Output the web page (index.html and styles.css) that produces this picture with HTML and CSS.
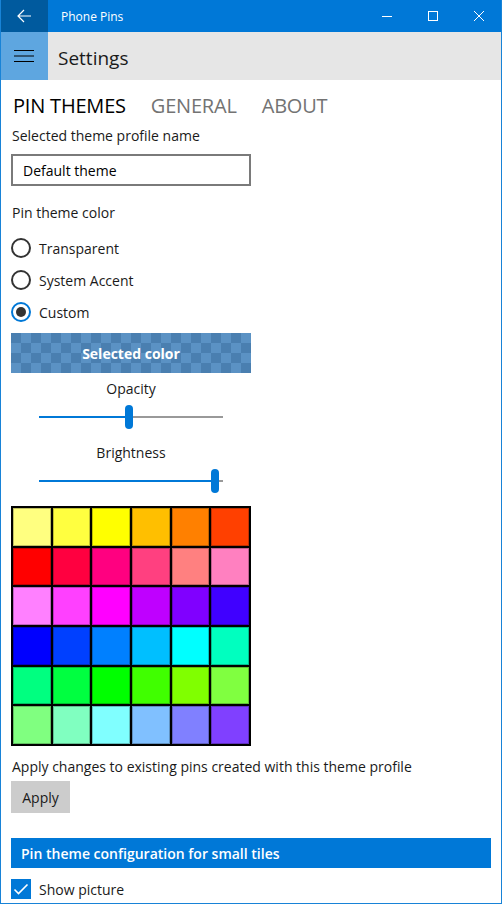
FILE: index.html
```html
<!DOCTYPE html>
<html lang="en">
<head>
    <meta charset="UTF-8">
    <title>Phone Pins</title>
    <link rel="stylesheet" href="styles.css">
</head>
<body>

    <div class="window">
        <div class="titlebar">
            <div class="back-btn">
                <svg width="16" height="16" viewBox="0 0 16 16"><path d="M15 8H2M8 2L2 8l6 6" fill="none" stroke="#fff" stroke-width="1.2"/></svg>
            </div>
            <div class="app-title">Phone Pins</div>
            <div class="caption-btns">
                <div class="caption-btn"><svg width="10" height="10" viewBox="0 0 10 10"><path d="M0 5.5h10" stroke="#fff" stroke-width="1"/></svg></div>
                <div class="caption-btn"><svg width="10" height="10" viewBox="0 0 10 10"><rect x="0.5" y="0.5" width="9" height="9" fill="none" stroke="#fff" stroke-width="1"/></svg></div>
                <div class="caption-btn"><svg width="10" height="10" viewBox="0 0 10 10"><path d="M0 0L10 10M10 0L0 10" stroke="#fff" stroke-width="1"/></svg></div>
            </div>
        </div>

        <div class="header">
            <div class="menu-btn">
                <svg width="20" height="14" viewBox="0 0 20 14"><path d="M0 1.5h20M0 7h20M0 12.5h20" stroke="#000" stroke-width="1.2"/></svg>
            </div>
            <div class="page-title">Settings</div>
        </div>

        <div class="content">
            <div class="tabs">
                <span class="tab active">PIN THEMES</span>
                <span class="tab">GENERAL</span>
                <span class="tab">ABOUT</span>
            </div>

            <div class="label first-label">Selected theme profile name</div>
            <div class="textbox">Default theme</div>

            <div class="label color-label">Pin theme color</div>
            <div class="radios">
                <div class="radio-row"><span class="radio"></span>Transparent</div>
                <div class="radio-row"><span class="radio"></span>System Accent</div>
                <div class="radio-row"><span class="radio checked"></span>Custom</div>
            </div>

            <div class="selected-color">Selected color</div>

            <div class="slider-block">
                <div class="slider-label">Opacity</div>
                <div class="slider">
                    <div class="track-fill" style="width: 86px"></div>
                    <div class="thumb"></div>
                    <div class="track-rest"></div>
                </div>
            </div>
            <div class="slider-block">
                <div class="slider-label">Brightness</div>
                <div class="slider">
                    <div class="track-fill" style="width: 172px"></div>
                    <div class="thumb"></div>
                    <div class="track-rest"></div>
                </div>
            </div>

            <div class="palette" id="palette"></div>

            <div class="label apply-label">Apply changes to existing pins created with this theme profile</div>
            <div class="apply-btn">Apply</div>

            <div class="section-bar">Pin theme configuration for small tiles</div>
            <div class="check-row">
                <span class="checkbox">
                    <svg width="20" height="20" viewBox="0 0 20 20"><path d="M3.5 10.5l4 4 9-9" fill="none" stroke="#fff" stroke-width="1.6"/></svg>
                </span>
                Show picture
            </div>
        </div>
    </div>

    <script>
        const colors = [
            "#ffff80", "#ffff40", "#ffff00", "#ffbf00", "#ff8000", "#ff4000",
            "#ff0000", "#ff0040", "#ff0080", "#ff4080", "#ff8080", "#ff80c0",
            "#ff80ff", "#ff40ff", "#ff00ff", "#bf00ff", "#8000ff", "#4000ff",
            "#0000ff", "#0040ff", "#0080ff", "#00bfff", "#00ffff", "#00ffbf",
            "#00ff80", "#00ff40", "#00ff00", "#40ff00", "#80ff00", "#80ff40",
            "#80ff80", "#80ffc0", "#80ffff", "#80c0ff", "#8080ff", "#8040ff"
        ];

        const palette = document.getElementById("palette");
        colors.forEach(color => {
            const cell = document.createElement("div");
            cell.className = "swatch";
            cell.style.background = color;
            palette.appendChild(cell);
        });
    </script>

</body>
</html>
```

FILE: styles.css
```css
body {
    margin: 0;
    font-family: "Open Sans", "Noto Sans", sans-serif;
    color: #000;
    background: #fff;
}

.window {
    width: 502px;
    height: 904px;
    box-sizing: border-box;
    border: 1px solid #1883d7;
    border-top: none;
    overflow: hidden;
}

.titlebar {
    display: flex;
    align-items: center;
    height: 32px;
    margin: 0 -1px;
    background: #0078d7;
    color: #fff;
}

.back-btn {
    width: 48px;
    height: 32px;
    display: flex;
    align-items: center;
    justify-content: center;
    background: #005a9e;
}

.app-title {
    flex: 1;
    padding-left: 13px;
    font-size: 12px;
}

.caption-btns {
    display: flex;
}

.caption-btn {
    width: 46px;
    height: 32px;
    display: flex;
    align-items: center;
    justify-content: center;
}

.header {
    display: flex;
    align-items: center;
    height: 48px;
    margin-left: -1px;
    background: #e6e6e6;
}

.menu-btn {
    width: 48px;
    height: 48px;
    display: flex;
    align-items: center;
    justify-content: center;
    background: #5ea6e0;
}

.page-title {
    padding: 3px 0 0 10px;
    font-size: 19px;
    color: #1a1a1a;
}

.content {
    padding: 10px 10px 0 10px;
}

.tabs {
    display: flex;
    gap: 25px;
    padding-left: 2px;
    height: 30px;
    align-items: center;
}

.tab {
    font-size: 20px;
    color: #737373;
    letter-spacing: -0.2px;
}

.tab.active {
    color: #000;
}

.label {
    font-size: 14px;
    padding-left: 1px;
    margin-top: 4px;
    height: 20px;
    color: #1a1a1a;
}

.first-label {
    margin-top: 6px;
}

.textbox {
    width: 240px;
    height: 32px;
    box-sizing: border-box;
    margin-top: 8px;
    border: 2px solid #7a7a7a;
    padding: 5px 0 0 10px;
    font-size: 14px;
}

.color-label {
    margin-top: 17px;
}

.radios {
    margin-top: 9px;
}

.radio-row {
    display: flex;
    align-items: center;
    height: 32px;
    font-size: 14px;
    color: #1a1a1a;
}

.radio {
    width: 20px;
    height: 20px;
    box-sizing: border-box;
    border: 2px solid #333;
    border-radius: 50%;
    margin-right: 8px;
    position: relative;
}

.radio.checked {
    border-color: #0078d7;
}

.radio.checked::after {
    content: "";
    position: absolute;
    left: 3px;
    top: 3px;
    width: 10px;
    height: 10px;
    border-radius: 50%;
    background: #333;
}

.selected-color {
    width: 240px;
    height: 40px;
    margin-top: 5px;
    display: flex;
    align-items: center;
    justify-content: center;
    color: #fff;
    font-weight: 700;
    font-size: 14px;
    background-image: conic-gradient(#5b92c4 25%, #4a7fb0 0 50%, #5b92c4 0 75%, #4a7fb0 0);
    background-size: 20px 20px;
}

.slider-block {
    width: 240px;
    padding: 6px 0 4px 0;
}

.slider-label {
    text-align: center;
    font-size: 14px;
    height: 20px;
    color: #1a1a1a;
}

.slider {
    display: flex;
    align-items: center;
    margin: 2px 28px 0 28px;
    height: 32px;
}

.track-fill {
    height: 2px;
    background: #0078d7;
}

.track-rest {
    flex: 1;
    height: 2px;
    background: #999;
}

.thumb {
    width: 8px;
    height: 24px;
    border-radius: 4px;
    background: #0078d7;
}

.palette {
    display: grid;
    grid-template-columns: repeat(6, 1fr);
    gap: 2px;
    width: 240px;
    box-sizing: border-box;
    margin-top: 5px;
    padding: 2px;
    background: #000;
}

.swatch {
    height: 37.7px;
    box-shadow: inset 0 0 0 1px rgba(0, 0, 0, 0.25);
}

.apply-label {
    margin-top: 11px;
}

.apply-btn {
    width: 59px;
    height: 32px;
    margin-top: 4px;
    background: #cccccc;
    font-size: 14px;
    display: flex;
    align-items: center;
    justify-content: center;
    color: #1a1a1a;
}

.section-bar {
    height: 30px;
    margin-top: 25px;
    background: #0078d7;
    color: #fff;
    font-weight: 600;
    font-size: 14px;
    padding-left: 10px;
    display: flex;
    align-items: center;
}

.check-row {
    display: flex;
    align-items: center;
    margin-top: 11px;
    font-size: 14px;
    color: #1a1a1a;
}

.checkbox {
    width: 20px;
    height: 20px;
    background: #0078d7;
    margin-right: 8px;
    display: flex;
}
```
